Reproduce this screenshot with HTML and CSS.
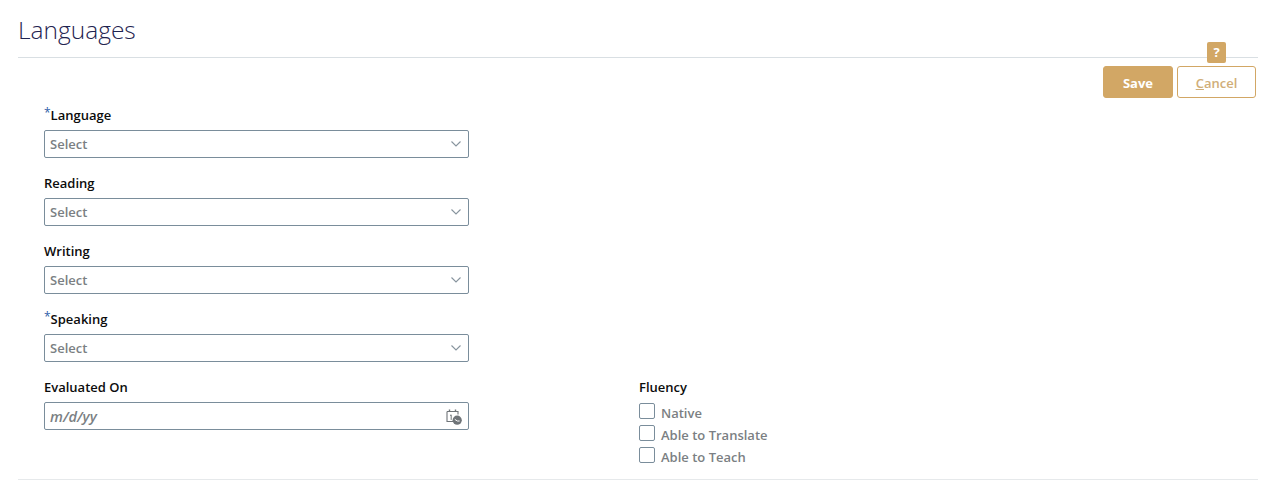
FILE: index.html
```html
<!DOCTYPE html>
<html lang="en">
<head>
<meta charset="utf-8">
<title>Languages</title>
<link rel="stylesheet" href="styles.css">
</head>
<body>
<main class="page">
  <header class="page-header"><h1 class="page-title">Languages</h1></header>
  <div class="actions">
    <span class="help-badge">?</span>
    <button class="btn btn-primary" type="button">Save</button>
    <button class="btn btn-secondary" type="button"><u>C</u>ancel</button>
  </div>
  <form class="form">
    <div class="field">
      <label class="label"><span class="req">*</span>Language</label>
      <div class="control"><span class="placeholder">Select</span>
        <svg class="chevron" viewBox="0 0 10 6" width="10" height="6"><path d="M.5 .5l4.5 4.5 4.5-4.5" fill="none" stroke="#87949e" stroke-width="1.1"/></svg></div>
    </div>
    <div class="field">
      <label class="label">Reading</label>
      <div class="control"><span class="placeholder">Select</span>
        <svg class="chevron" viewBox="0 0 10 6" width="10" height="6"><path d="M.5 .5l4.5 4.5 4.5-4.5" fill="none" stroke="#87949e" stroke-width="1.1"/></svg></div>
    </div>
    <div class="field">
      <label class="label">Writing</label>
      <div class="control"><span class="placeholder">Select</span>
        <svg class="chevron" viewBox="0 0 10 6" width="10" height="6"><path d="M.5 .5l4.5 4.5 4.5-4.5" fill="none" stroke="#87949e" stroke-width="1.1"/></svg></div>
    </div>
    <div class="field">
      <label class="label"><span class="req">*</span>Speaking</label>
      <div class="control"><span class="placeholder">Select</span>
        <svg class="chevron" viewBox="0 0 10 6" width="10" height="6"><path d="M.5 .5l4.5 4.5 4.5-4.5" fill="none" stroke="#87949e" stroke-width="1.1"/></svg></div>
    </div>
    <div class="last-row">
      <div class="field field-date">
        <label class="label">Evaluated On</label>
        <div class="control control-date"><span class="placeholder placeholder-date">m/d/yy</span>
          <svg class="cal" viewBox="0 0 16 16" width="16" height="16">
            <path d="M3.5 0.5v2M9.5 0.5v2" stroke="#6f7478" stroke-width="1.4" fill="none"/>
            <path d="M1 2.5h11v3M1 2.5v10h6" stroke="#6f7478" stroke-width="1.1" fill="none"/>
            <path d="M4 6.5l1.2-.6v5" stroke="#6f7478" stroke-width="1" fill="none"/>
            <circle cx="11.2" cy="11.2" r="4.6" fill="#6f7478"/>
            <path d="M8.8 10.4l2.6 1.6h2.2" stroke="#fff" stroke-width="1" fill="none"/>
          </svg></div>
      </div>
      <fieldset class="fluency">
        <legend class="label fluency-title">Fluency</legend>
        <label class="check"><span class="box"></span>Native</label>
        <label class="check"><span class="box"></span>Able to Translate</label>
        <label class="check"><span class="box"></span>Able to Teach</label>
      </fieldset>
    </div>
  </form>
  <div class="bottom-rule"></div>
</main>
</body>
</html>
```

FILE: styles.css
```css
* { box-sizing: border-box; }
html, body { margin: 0; padding: 0; background: #fff; }
body { font-family: "Open Sans", "Noto Sans", "Liberation Sans", sans-serif; color: #111; overflow: hidden; }
.page { width: 1265px; height: 490px; padding: 0 7px 0 18px; }
.page-header { height: 58px; border-bottom: 1px solid #d9dfe3; }
.page-title { margin: 0; padding-top: 14px; font-size: 24.5px; line-height: 32px; font-weight: 300; color: #1f2450; }
.actions { position: relative; display: flex; justify-content: flex-end; gap: 4px; padding: 8px 2px 0 0; height: 40px; }
.help-badge { position: absolute; top: -16px; right: 32px; width: 19px; height: 21px; border-radius: 2px; background: #d2a765; color: #fff; font-size: 13px; font-weight: 700; line-height: 21px; text-align: center; }
.btn { height: 32px; border-radius: 3px; font-family: inherit; font-size: 13px; padding: 1px 0 0; cursor: pointer; }
.btn-primary { width: 70px; background: #d2a765; border: 1px solid #d2a765; color: #fff; font-weight: 700; }
.btn-secondary { width: 79px; background: #fff; border: 1px solid #d2a765; color: #d0ae78; font-weight: 600; }
.form { padding-left: 26px; }
.field { width: 425px; height: 68px; padding-top: 8px; }
.label { display: block; font-size: 13px; font-weight: 600; line-height: 18px; height: 24px; color: #0c0c0c; }
.req { color: #2f5fa8; font-weight: 400; font-size: 12px; position: relative; top: -3px; }
.control { display: flex; align-items: center; justify-content: space-between; height: 28px; border: 1px solid #7a8d9b; border-radius: 2px; padding: 0 7px 0 5px; }
.placeholder { font-size: 13px; font-weight: 600; color: #7b7f83; }
.placeholder-date { font-style: italic; font-size: 14.5px; }
.control-date { padding-right: 6px; }
.chevron { flex: none; }
.cal { flex: none; margin-top: 2px; }
.last-row { display: flex; gap: 170px; align-items: flex-start; }
.fluency { border: 0; margin: 0; padding: 8px 0 0; min-width: 0; }
.fluency-title { float: left; width: 100%; padding: 0; height: 24px; }
.check { clear: both; display: flex; align-items: center; gap: 6px; height: 22px; font-size: 13px; font-weight: 600; color: #7b7f83; }
.box { flex: none; width: 16px; height: 16px; margin-bottom: 4px; border: 1px solid #7a8d9b; border-radius: 2px; }
.bottom-rule { border-top: 1px solid #e6e9eb; margin-top: 11px; }
```
